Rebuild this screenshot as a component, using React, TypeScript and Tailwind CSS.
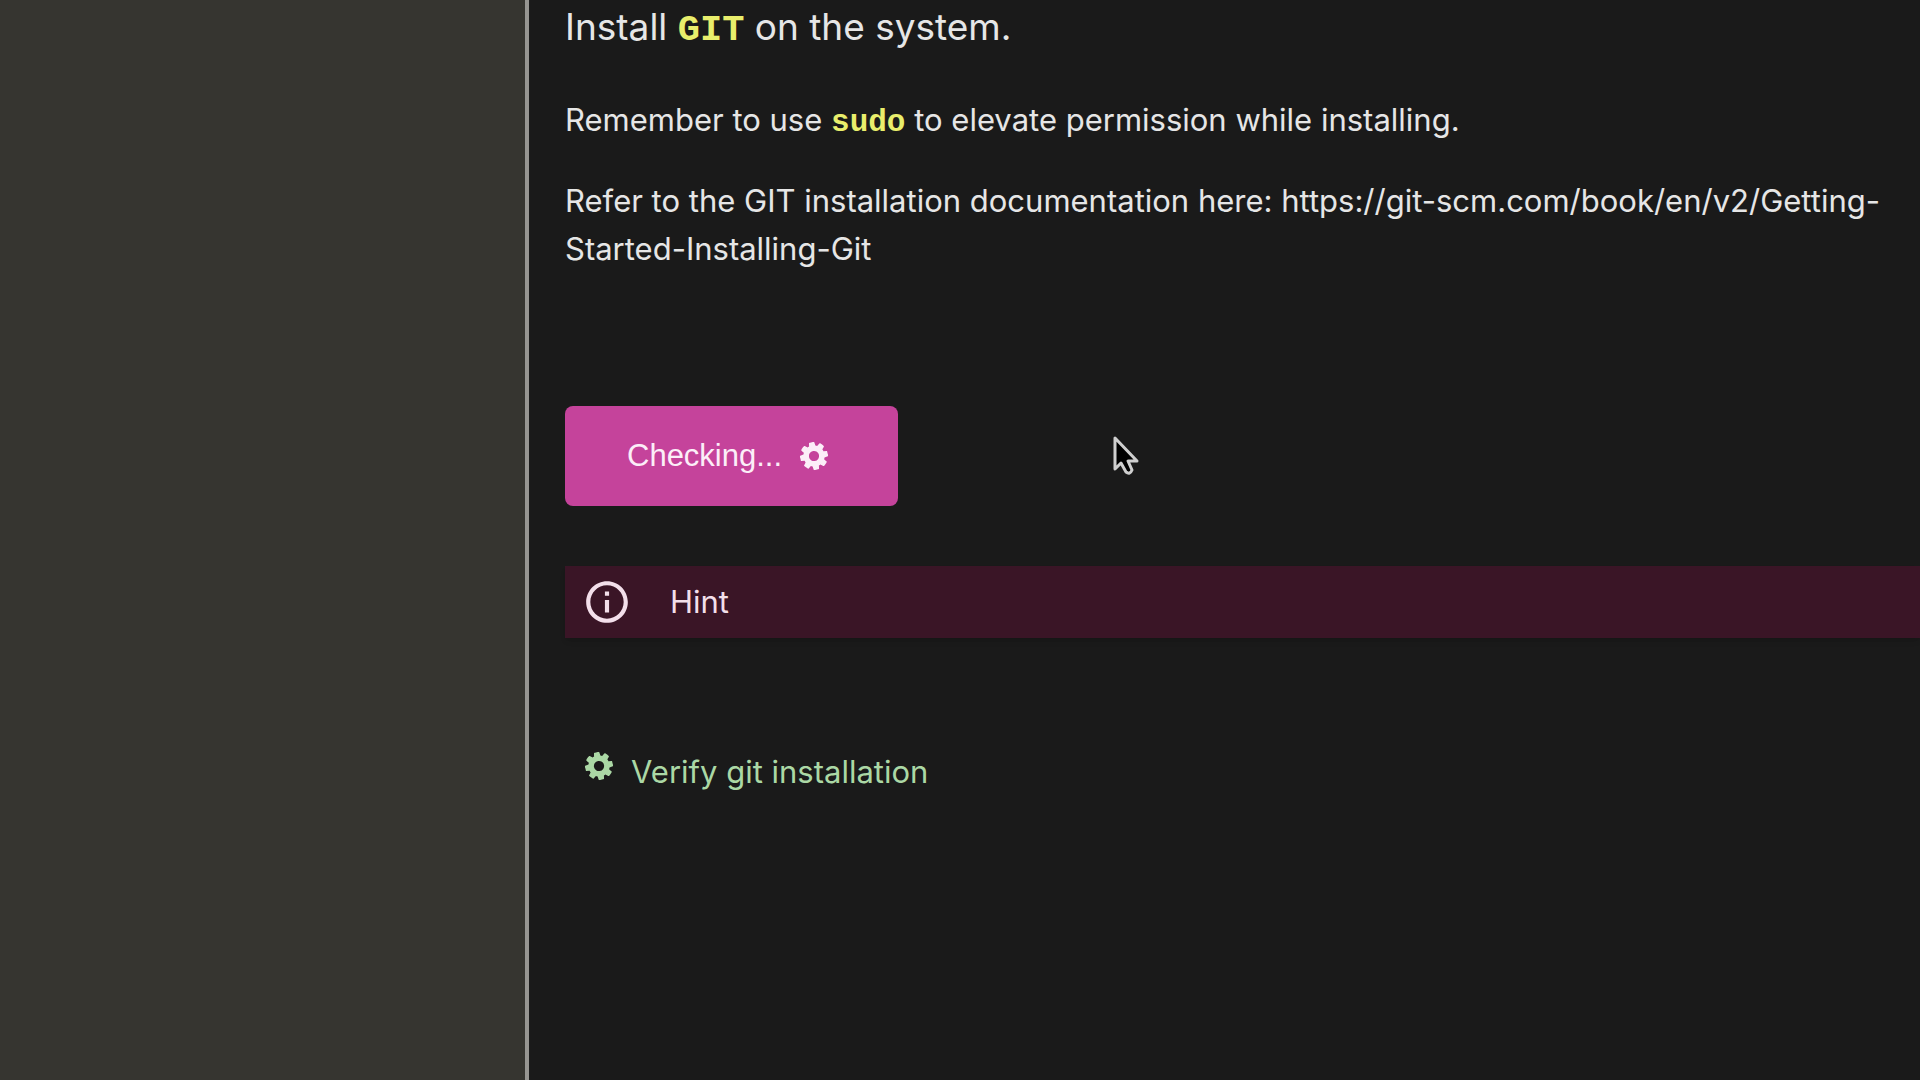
import { ReactNode } from 'react'
import clsx from 'clsx'
import { MdInfoOutline } from 'react-icons/md'

const Code = ({ children }: { children: ReactNode }) => (
  <code className="font-['Liberation_Mono','Courier_New',monospace] font-bold text-[#e9ee6c]">
    {children}
  </code>
)

const Cog = ({ className }: { className?: string }) => (
  <svg
    className={clsx('size-7 shrink-0 -rotate-10', className)}
    viewBox="0 128 1536 1536"
    fill="currentColor"
    fillRule="evenodd"
    aria-hidden="true"
  >
    <path d="M1048 896a280 280 0 1 0-560 0a280 280 0 1 0 560 0zM1536 787v222q0 12-8 23t-20 13l-185 28q-19 54-39 91 35 50 107 138 10 12 10 25t-9 23q-27 37-99 108t-94 71q-12 0-26-9l-138-108q-44 23-91 38-16 136-29 186-7 28-36 28h-222q-14 0-24.5-8.5t-11.5-21.5l-28-184q-49-16-90-37l-141 107q-10 9-25 9-14 0-25-11-126-114-165-168-7-10-7-23 0-12 8-23 15-21 51-66.5t54-70.5q-27-50-41-99l-183-27q-13-2-21-12.5t-8-23.5v-222q0-12 8-23t19-13l186-28q14-46 39-92-40-57-107-138-10-12-10-24 0-10 9-23 26-36 98.5-107.5t94.5-71.5q13 0 26 10l138 107q44-23 91-38 16-136 29-186 7-28 36-28h222q14 0 24.5 8.5t11.5 21.5l28 184q49 16 90 37l142-107q9-9 24-9 13 0 25 10 129 119 165 170 7 8 7 22 0 12-8 23-15 21-51 66.5t-54 70.5q26 50 41 98l183 28q13 2 21 12.5t8 23.5z" />
  </svg>
)

const Pointer = () => (
  <svg
    className="absolute top-[434px] left-[584px] h-11 w-7"
    viewBox="0 0 28 44"
    aria-hidden="true"
  >
    <path
      d="M2 4V35L8 29L13 38Q17 41 19 36L15 27H24Z"
      fill="#000"
      stroke="#cfcfcf"
      strokeWidth="3"
      strokeLinejoin="round"
    />
  </svg>
)

const App = () => {
  return (
    <div
      className={clsx(
        'flex min-h-screen overflow-x-hidden bg-[#1a1a1a] text-[31px] leading-[48px] text-[#e6e6e6]',
        "font-[Inter,'Liberation_Sans',sans-serif]",
      )}
    >
      <aside className="w-[525px] shrink-0 bg-[#363530]"></aside>
      <main className="relative min-w-0 flex-1 border-l-4 border-[#969591] pl-9">
        <h1 className="pt-[3px] text-[37px]">
          Install <Code>GIT</Code> on the system.
        </h1>
        <p className="mt-[42px] pr-9">
          Remember to use <Code>sudo</Code> to elevate permission while
          installing.
        </p>
        <p className="mt-[30px] pr-9">
          Refer to the GIT installation documentation here:
          https://git-scm.com/book/en/v2/Getting-Started-Installing-Git
        </p>
        <button
          type="button"
          className="mt-[133px] flex h-[100px] items-center gap-[18px] rounded-lg bg-[#c5439b] pr-[70px] pl-[62px] font-['Liberation_Sans',sans-serif] text-[#fceef8]"
        >
          Checking...
          <Cog />
        </button>
        <button
          type="button"
          className="mt-15 flex h-[72px] w-full items-center gap-[38px] bg-[#3a1526] px-[17px] text-[#f3dfea] shadow-md"
        >
          <MdInfoOutline className="size-[50px]" />
          Hint
        </button>
        <ul className="mt-[110px] pl-5">
          <li className="flex items-center gap-[18px] text-[#abd8a5]">
            <Cog className="mb-3" />
            Verify git installation
          </li>
        </ul>
        <Pointer />
      </main>
    </div>
  )
}

export default App
